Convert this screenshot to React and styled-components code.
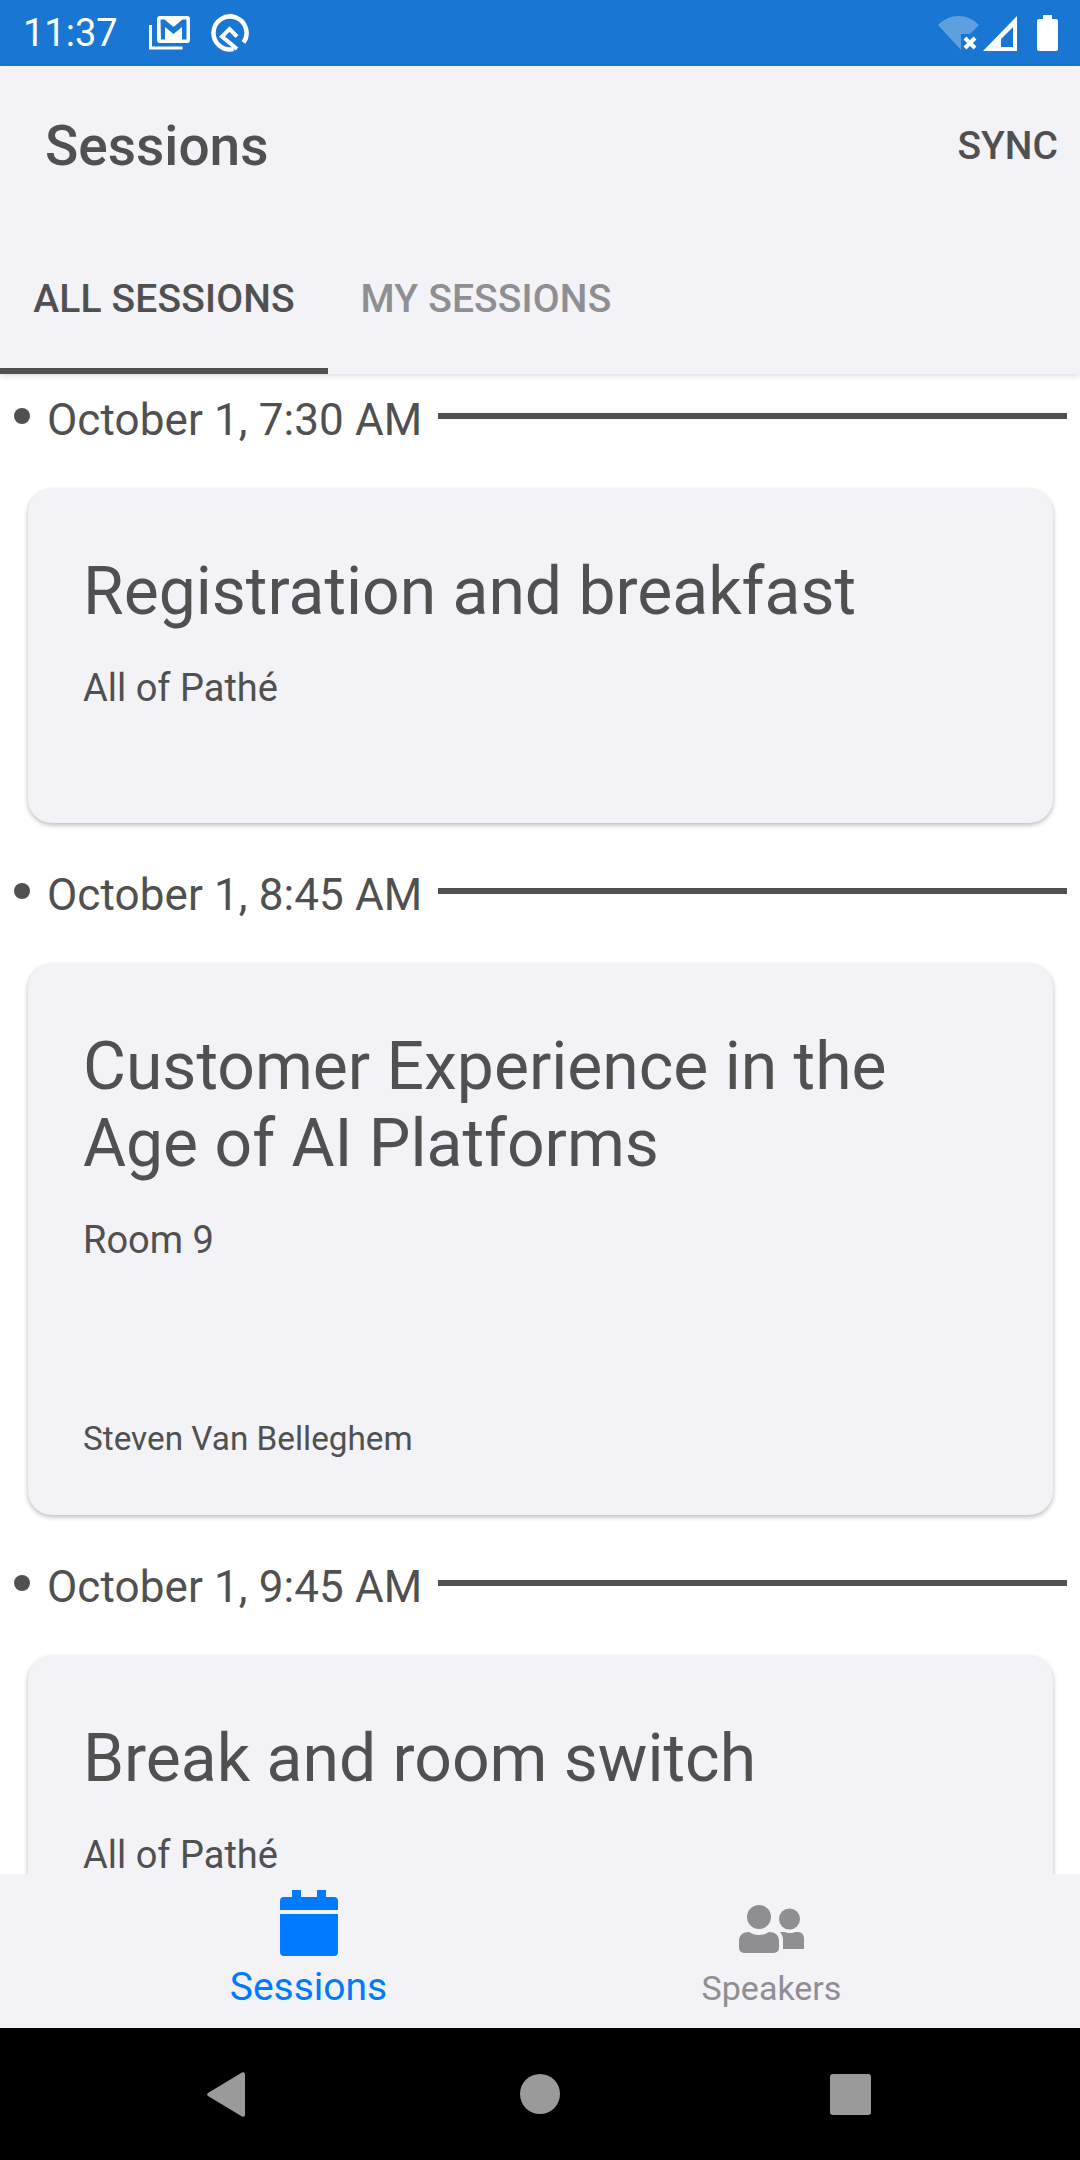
import React from "react"
import styled, { createGlobalStyle } from "styled-components"

const Ink = "#505050"
const Gray = "#8e8e93"
const Blue = "#007aff"
const Panel = "#f2f2f7"
const BarBlue = "#1976d2"

const Global = createGlobalStyle`
  html, body { margin: 0; padding: 0; background: #fff; }
  body { font-family: Roboto, "Liberation Sans", sans-serif; }
`

const Screen = styled.div`
  width: 1080px;
  height: 2160px;
  display: flex;
  flex-direction: column;
  overflow: hidden;
  color: ${Ink};
`

const StatusBar = styled.div`
  height: 66px;
  flex: none;
  background: ${BarBlue};
  color: #fff;
  display: flex;
  align-items: center;
  padding: 0 22px 0 23px;
  font-size: 38px;
`

const StatusLeft = styled.div`
  display: flex;
  align-items: center;
  gap: 21px;
  margin-left: 31px;
`

const StatusRight = styled.div`
  display: flex;
  align-items: center;
  margin-left: auto;
  gap: 4px;
`

const BatteryWrap = styled.span`
  display: flex;
  margin-left: 16px;
`

const Header = styled.header`
  flex: none;
  background: ${Panel};
  box-shadow: 0 2px 6px rgba(0, 0, 0, 0.14);
  position: relative;
`

const TitleRow = styled.div`
  height: 160px;
  display: flex;
  align-items: center;
  justify-content: space-between;
  padding: 0 22px 0 45px;
`

const Title = styled.h1`
  margin: 0;
  font-size: 55px;
  font-weight: 500;
`

const Sync = styled.div`
  font-size: 39px;
  font-weight: 500;
`

const Tabs = styled.div`
  display: flex;
`

const Tab = styled.div`
  width: ${p => p.$width}px;
  height: 148px;
  box-sizing: border-box;
  padding-top: 4px;
  display: flex;
  align-items: center;
  justify-content: center;
  font-size: 39px;
  font-weight: 500;
  letter-spacing: 0.15px;
  color: ${p => (p.$active ? Ink : Gray)};
  border-bottom: 6px solid ${p => (p.$active ? Ink : "transparent")};
`

const List = styled.main`
  flex: 1;
  min-height: 0;
  overflow: hidden;
  padding: 0 13px 0 14px;
`

const SlotHead = styled.div`
  height: 84px;
  display: flex;
  align-items: center;
  margin-bottom: 31px;
`

const Dot = styled.span`
  width: 16px;
  height: 16px;
  border-radius: 50%;
  background: ${Ink};
  margin-right: 17px;
  flex: none;
`

const SlotTime = styled.span`
  font-size: 44px;
  margin-top: 8px;
  margin-right: 16px;
  letter-spacing: 0.1px;
`

const Rule = styled.span`
  flex: 1;
  height: 6px;
  background: ${Ink};
`

const Card = styled.article`
  margin: 0 14px 26px 14px;
  box-sizing: border-box;
  height: ${p => p.$height}px;
  padding: 64px 55px 0;
  background: ${Panel};
  border-radius: 24px;
  box-shadow: 0 2px 5px rgba(0, 0, 0, 0.28);
  display: flex;
  flex-direction: column;
`

const CardTitle = styled.h2`
  margin: 0;
  font-size: 66px;
  line-height: 77px;
  font-weight: 400;
`

const Room = styled.div`
  margin-top: 33px;
  font-size: 38px;
  line-height: 50px;
`

const Speaker = styled.div`
  margin-top: auto;
  margin-bottom: 54px;
  font-size: 33.300px;
  line-height: 44px;
`

const BottomTabs = styled.nav`
  height: 154px;
  flex: none;
  background: ${Panel};
  display: grid;
  grid-template-columns: 1fr 1fr;
  padding: 0 77px;
  position: relative;
`

const BottomTab = styled.div`
  display: flex;
  flex-direction: column;
  align-items: center;
  padding-top: ${p => (p.$active ? 16 : 31)}px;
  color: ${p => (p.$active ? Blue : Gray)};
`

const BottomLabel = styled.span`
  font-size: ${p => (p.$active ? 39 : 34)}px;
  line-height: 44px;
  margin-top: ${p => (p.$active ? 9 : 13)}px;
`

const NavBar = styled.div`
  height: 132px;
  flex: none;
  background: #000;
  display: flex;
  align-items: center;
  justify-content: space-between;
  padding: 0 209px 0 207px;
`

const Home = styled.span`
  width: 40px;
  height: 40px;
  margin-left: 5px;
  border-radius: 50%;
  background: #9a9a9a;
`

const Recents = styled.span`
  width: 41px;
  height: 41px;
  border-radius: 3px;
  background: #9a9a9a;
`

const slots = [
  { time: "October 1, 7:30 AM", title: ["Registration and breakfast"], room: "All of Pathé", height: 334 },
  { time: "October 1, 8:45 AM", title: ["Customer Experience in the", "Age of AI Platforms"], room: "Room 9", speaker: "Steven Van Belleghem", height: 551 },
  { time: "October 1, 9:45 AM", title: ["Break and room switch"], room: "All of Pathé", height: 334 },
]

const Mail = () => (
  <svg width="41" height="34" viewBox="0 0 41 34">
    <path d="M1.500 9v23h32" fill="none" stroke="#fff" strokeWidth="3" />
    <rect x="8" y="0" width="33" height="27" rx="3" fill="#fff" />
    <path d="M11.500 3.500h4l9 7.500 9-7.500h4v20h-4.500V11l-8.500 7-8.500-7v12.500h-4z" fill={BarBlue} />
  </svg>
)

const QIcon = () => (
  <svg width="38" height="38" viewBox="0 0 38 38">
    <path d="M22.500 35.100A16.500 16.500 0 1 1 32.500 28.500" fill="none" stroke="#fff" strokeWidth="4.500" />
    <path d="M26 22.500L18.500 15 11 22.500 26 35" fill="none" stroke="#fff" strokeWidth="4" />
  </svg>
)

const Wifi = () => (
  <svg width="41" height="34" viewBox="0 0 41 34">
    <path d="M0 9C12-3 29-3 41 9L32 18H23v16z" fill="#fff" fillOpacity="0.3" />
    <path d="M27 22l10 10m0-10L27 32" stroke="#fff" strokeWidth="4" />
  </svg>
)

const Signal = () => (
  <svg width="34" height="35" viewBox="0 0 34 35">
    <path d="M34 0v35H0zM30 11L18 23v8h12z" fill="#fff" fillRule="evenodd" />
  </svg>
)

const Battery = () => (
  <svg width="21" height="36" viewBox="0 0 21 36">
    <path d="M6 0h9v4h4a2 2 0 0 1 2 2v28a2 2 0 0 1-2 2H2a2 2 0 0 1-2-2V6a2 2 0 0 1 2-2h4z" fill="#fff" />
  </svg>
)

const Calendar = () => (
  <svg width="58" height="66" viewBox="0 0 58 66">
    <path d="M12 0h9v7h16V0h9v7h8a4 4 0 0 1 4 4v9H0v-9a4 4 0 0 1 4-4h8z" fill={Blue} />
    <path d="M0 24h58v38a4 4 0 0 1-4 4H4a4 4 0 0 1-4-4z" fill={Blue} />
  </svg>
)

const People = () => (
  <svg width="66" height="48" viewBox="0 0 66 48">
    <circle cx="20" cy="12" r="12" fill={Gray} />
    <circle cx="50.500" cy="14" r="10.500" fill={Gray} />
    <path d="M0 43V36c0-6 4-9 10-9 3 2 6 3 10 3s7-1 10-3c6 0 10 3 10 9v7a5 5 0 0 1-5 5H5a5 5 0 0 1-5-5z" fill={Gray} />
    <path d="M44 44V35c0-3-1-6-3-8h5c2 1 3 1 5 1s3 0 5-1h3c4 0 6 3 6 7v7a2 2 0 0 1-2 3z" fill={Gray} />
  </svg>
)

const Back = () => (
  <svg width="38" height="45" viewBox="0 0 38 45">
    <path d="M38 2v41a2 2 0 0 1-3 1.500L1 24a2 2 0 0 1 0-3L35 .5A2 2 0 0 1 38 2z" fill="#9a9a9a" />
  </svg>
)

export default function App() {
  return (
    <Screen>
      <Global />
      <StatusBar>
        11:37
        <StatusLeft>
          <Mail />
          <QIcon />
        </StatusLeft>
        <StatusRight>
          <Wifi />
          <Signal />
          <BatteryWrap><Battery /></BatteryWrap>
        </StatusRight>
      </StatusBar>
      <Header>
        <TitleRow>
          <Title>Sessions</Title>
          <Sync>SYNC</Sync>
        </TitleRow>
        <Tabs>
          <Tab $active $width={328}>ALL SESSIONS</Tab>
          <Tab $width={316}>MY SESSIONS</Tab>
        </Tabs>
      </Header>
      <List>
        {slots.map(slot => (
          <section key={slot.time}>
            <SlotHead>
              <Dot />
              <SlotTime>{slot.time}</SlotTime>
              <Rule />
            </SlotHead>
            <Card $height={slot.height}>
              <CardTitle>
                {slot.title.map(line => <div key={line}>{line}</div>)}
              </CardTitle>
              <Room>{slot.room}</Room>
              {slot.speaker && <Speaker>{slot.speaker}</Speaker>}
            </Card>
          </section>
        ))}
      </List>
      <BottomTabs>
        <BottomTab $active>
          <Calendar />
          <BottomLabel $active>Sessions</BottomLabel>
        </BottomTab>
        <BottomTab>
          <People />
          <BottomLabel>Speakers</BottomLabel>
        </BottomTab>
      </BottomTabs>
      <NavBar>
        <Back />
        <Home />
        <Recents />
      </NavBar>
    </Screen>
  )
}
